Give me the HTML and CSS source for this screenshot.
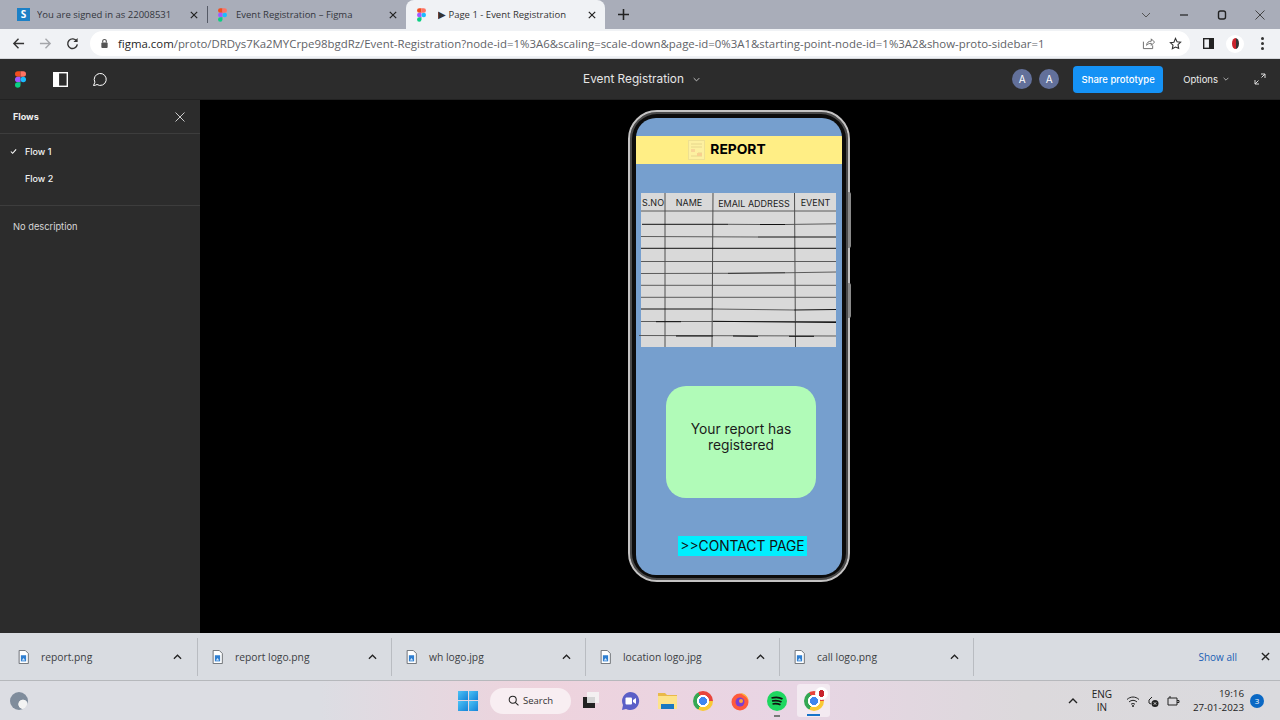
FILE: index.html
```html
<!DOCTYPE html>
<html lang="en">
<head>
    <meta charset="UTF-8">
    <meta name="viewport" content="width=device-width, initial-scale=1.0">
    <title>Page 1 - Event Registration</title>
    <link rel="stylesheet" href="styles.css">
</head>
<body>
    <!-- Shared icons -->
    <svg class="icon-defs" aria-hidden="true">
        <symbol id="figma" viewBox="0 0 12 18">
            <path d="M3 0h3v6H3a3 3 0 0 1 0-6z" fill="#f24e1e"/>
            <path d="M6 0h3a3 3 0 0 1 0 6H6z" fill="#ff7262"/>
            <path d="M3 6h3v6H3a3 3 0 0 1 0-6z" fill="#a259ff"/>
            <circle cx="9" cy="9" r="3" fill="#1abcfe"/>
            <path d="M3 12h3v3a3 3 0 1 1-3-3z" fill="#0acf83"/>
        </symbol>
        <symbol id="close" viewBox="0 0 10 10">
            <path d="M1 1l8 8M9 1l-8 8" fill="none" stroke="currentColor" stroke-width="1.5"/>
        </symbol>
        <symbol id="chev-up" viewBox="0 0 10 6">
            <path d="M1 5l4-4 4 4" fill="none" stroke="currentColor" stroke-width="1.4"/>
        </symbol>
        <symbol id="chev-down" viewBox="0 0 10 6">
            <path d="M1 1l4 4 4-4" fill="none" stroke="currentColor" stroke-width="1.2"/>
        </symbol>
        <symbol id="file" viewBox="0 0 12 16">
            <path d="M1 .5h7l3.5 3.5v11.5H1z" fill="#fff" stroke="#5f6368"/>
            <rect x="3" y="6" width="6" height="7" fill="#2f7fd1"/>
            <path d="M4 12l2-3 2 3z" fill="#cfe4fa"/>
        </symbol>
    </svg>

    <!-- Browser tabs -->
    <div class="tabstrip">
        <div class="tab">
            <span class="favicon-s">S</span>
            <span class="tab-title">You are signed in as 22008531</span>
            <svg class="tab-close"><use href="#close"/></svg>
        </div>
        <div class="tab tab-divided">
            <svg class="tab-figma"><use href="#figma"/></svg>
            <span class="tab-title">Event Registration – Figma</span>
            <svg class="tab-close"><use href="#close"/></svg>
        </div>
        <div class="tab tab-active">
            <svg class="tab-figma"><use href="#figma"/></svg>
            <span class="tab-title">▶ Page 1 - Event Registration</span>
            <svg class="tab-close"><use href="#close"/></svg>
        </div>
        <svg class="new-tab" viewBox="0 0 12 12"><path d="M6 0v12M0 6h12" stroke="#222" stroke-width="1.7"/></svg>
        <div class="window-controls">
            <svg viewBox="0 0 12 12"><path d="M2 4l4 4 4-4" fill="none" stroke="#555" stroke-width="1"/></svg>
            <svg viewBox="0 0 12 12"><path d="M2 6h8" stroke="#222" stroke-width="1.2"/></svg>
            <svg viewBox="0 0 12 12"><rect x="2.5" y="2" width="7" height="8" rx="2" fill="none" stroke="#222" stroke-width="1.4"/></svg>
            <svg viewBox="0 0 12 12"><path d="M1.5 1.5l9 9M10.5 1.5l-9 9" stroke="#444" stroke-width="1"/></svg>
        </div>
    </div>

    <!-- Address bar -->
    <div class="toolbar">
        <svg class="nav-icon" viewBox="0 0 14 14"><path d="M13 7H2M7 2L2 7l5 5" fill="none" stroke="#333" stroke-width="1.5"/></svg>
        <svg class="nav-icon" viewBox="0 0 14 14"><path d="M1 7h11M7 2l5 5-5 5" fill="none" stroke="#a4a6aa" stroke-width="1.5"/></svg>
        <svg class="nav-icon" viewBox="0 0 14 14"><path d="M11.5 4.5A5.2 5.2 0 1 0 12.2 8" fill="none" stroke="#333" stroke-width="1.5"/><path d="M12.5 1v4.5H8z" fill="#333"/></svg>
        <div class="omnibox">
            <svg class="lock" viewBox="0 0 10 12"><path d="M3 5V3.5a2 2 0 0 1 4 0V5" fill="none" stroke="#555" stroke-width="1.2"/><rect x="1.5" y="5" width="7" height="6" rx="1" fill="#555"/></svg>
            <span class="url">figma.com<span class="url-path">/proto/DRDys7Ka2MYCrpe98bgdRz/Event-Registration?node-id=1%3A6&amp;scaling=scale-down&amp;page-id=0%3A1&amp;starting-point-node-id=1%3A2&amp;show-proto-sidebar=1</span></span>
            <svg class="omni-share" viewBox="0 0 14 14"><path d="M1.5 5v7.5h10V9M5 9c0-3 2-4.5 5-4.5V2l3.5 3.5L10 9V6.8C8 6.8 6 7.5 5 9z" fill="none" stroke="#666" stroke-width="1"/></svg>
            <svg class="omni-star" viewBox="0 0 14 14"><path d="M7 1.5l1.7 3.6 3.8.5-2.8 2.7.7 3.9L7 10.8l-3.4 1.9.7-3.9-2.800-2.7 3.800-.5z" fill="none" stroke="#333" stroke-width="1.2"/></svg>
        </div>
        <svg class="side-panel" viewBox="0 0 12 12"><rect x=".75" y=".75" width="10.5" height="10.5" fill="none" stroke="#222" stroke-width="1.5"/><rect x="6.5" y="1" width="5" height="10" fill="#222"/></svg>
        <span class="profile"><span class="profile-dot"></span></span>
        <span class="kebab"><i></i><i></i><i></i></span>
    </div>

    <!-- Figma prototype header -->
    <header class="figma-bar">
        <div class="figma-tools">
            <svg class="figma-logo"><use href="#figma"/></svg>
            <svg class="panel-icon" viewBox="0 0 16 16"><rect x=".75" y=".75" width="14.5" height="14.5" fill="none" stroke="#fff" stroke-width="1.5"/><rect x="1" y="1" width="5.5" height="14" fill="#fff"/></svg>
            <svg class="comment-icon" viewBox="0 0 16 16"><path d="M1.5 14.5l1.4-3.3A6 6 0 1 1 5 13.5c-1 .6-2.200 1-3.500 1z" fill="none" stroke="#fff" stroke-width="1"/></svg>
        </div>
        <div class="figma-title">Event Registration <svg class="title-chev"><use href="#chev-down"/></svg></div>
        <div class="figma-actions">
            <span class="avatar">A</span>
            <span class="avatar">A</span>
            <span class="share-btn">Share prototype</span>
            <span class="options">Options <svg class="options-chev"><use href="#chev-down"/></svg></span>
            <svg class="expand-icon" viewBox="0 0 12 12"><path d="M7 1h4v4M11 1L7.5 4.5M1 7v4h4M1 11l3.5-3.5" fill="none" stroke="#ddd" stroke-width="1"/></svg>
        </div>
    </header>

    <main class="workspace">
        <aside class="sidebar">
            <div class="sidebar-head">
                <span>Flows</span>
                <svg class="sidebar-close" viewBox="0 0 10 10"><path d="M.5.5l9 9M9.5.5l-9 9" stroke="#ddd" stroke-width=".9"/></svg>
            </div>
            <ul class="flow-list">
                <li><svg class="flow-check" viewBox="0 0 8 8"><path d="M1 4l2 2 4-4.5" fill="none" stroke="#fff" stroke-width="1.2"/></svg>Flow 1</li>
                <li>Flow 2</li>
            </ul>
            <p class="flow-desc">No description</p>
        </aside>

        <section class="canvas">
            <div class="phone">
                <span class="side-btn side-btn-long"></span>
                <span class="side-btn side-btn-short"></span>
                <div class="screen">
                    <div class="report-band">
                        <svg class="report-logo" viewBox="0 0 17 20">
                            <rect x=".5" y=".5" width="16" height="19" fill="#fdf0a0" stroke="#eee092"/>
                            <path d="M3 4h11M3 7h11M3 10h4M10 13h4M3 16h11" stroke="#e6d68c"/>
                            <rect x="3" y="9" width="4" height="3" fill="#f8d596"/>
                            <rect x="9" y="13" width="5" height="3" fill="#f8cf8e"/>
                        </svg>
                        <span>REPORT</span>
                    </div>

                    <div class="report-table">
                        <div class="table-head">
                            <span>S.NO</span>
                            <span>NAME</span>
                            <span class="head-email">EMAIL ADDRESS</span>
                            <span>EVENT</span>
                        </div>
                        <!-- The rows are hand drawn, so the rules are a little uneven -->
                        <svg class="table-lines" viewBox="0 0 195 154">
                            <g stroke="#2b2b2b" stroke-width=".8" fill="none">
                                <path d="M24 0V154M72 0L71 154M153.5 0L154.5 154"/>
                            </g>
                            <g stroke="#4d4d4d" stroke-width=".9" fill="none">
                                <path d="M0 18H195"/>
                                <path d="M87 31.3L119 31.5M144 31.5L195 30.8"/>
                                <path d="M0 43.5L117 44"/>
                                <path d="M0 68.5H195"/>
                                <path d="M0 80.5L87 80.3M144 79.8L195 79"/>
                                <path d="M0 92.3H195"/>
                                <path d="M0 104.3H195"/>
                                <path d="M72 116L153 117"/>
                                <path d="M0 128.5H195"/>
                                <path d="M-2 142.5L195 143"/>
                            </g>
                            <g stroke="#111" stroke-width="1" fill="none">
                                <path d="M1 31.3L87 31.3M119 31.5L144 31.5"/>
                                <path d="M117 44L195 44"/>
                                <path d="M0 55.3H195"/>
                                <path d="M87 80.3L144 79.8"/>
                                <path d="M0 116H72M153 117L195 116.500"/>
                                <path d="M15 128.700H40M72 128.300L195 129.500"/>
                                <path d="M35 143L72 143M92 143L117 143.300M148 143.300L173 143.300"/>
                            </g>
                        </svg>
                    </div>

                    <div class="message-card">Your report has registered</div>
                    <div class="contact-link">&gt;&gt;CONTACT PAGE</div>
                </div>
            </div>
        </section>
    </main>

    <!-- Chrome downloads -->
    <div class="downloads">
        <div class="download"><svg class="file-icon"><use href="#file"/></svg><span class="download-name">report.png</span><svg class="download-chev"><use href="#chev-up"/></svg></div>
        <div class="download"><svg class="file-icon"><use href="#file"/></svg><span class="download-name">report logo.png</span><svg class="download-chev"><use href="#chev-up"/></svg></div>
        <div class="download"><svg class="file-icon"><use href="#file"/></svg><span class="download-name">wh logo.jpg</span><svg class="download-chev"><use href="#chev-up"/></svg></div>
        <div class="download"><svg class="file-icon"><use href="#file"/></svg><span class="download-name">location logo.jpg</span><svg class="download-chev"><use href="#chev-up"/></svg></div>
        <div class="download"><svg class="file-icon"><use href="#file"/></svg><span class="download-name">call logo.png</span><svg class="download-chev"><use href="#chev-up"/></svg></div>
        <span class="show-all">Show all</span>
        <svg class="downloads-close"><use href="#close"/></svg>
    </div>

    <!-- Windows taskbar -->
    <footer class="taskbar">
        <span class="weather"></span>
        <div class="task-center">
            <span class="win-logo"><i></i><i></i><i></i><i></i></span>
            <span class="search-pill">
                <svg class="search-icon" viewBox="0 0 14 14"><circle cx="6" cy="6" r="4.5" fill="none" stroke="#222" stroke-width="1.3"/><path d="M9.3 9.3l4 4" stroke="#222" stroke-width="1.3"/></svg>
                Search
            </span>
            <span class="task-view"></span>
            <svg class="teams-icon" viewBox="0 0 20 20"><path d="M10 1a9 9 0 1 1-4 17l-4 1 1-5A9 9 0 0 1 10 1z" fill="#5b5fc7"/><rect x="5.5" y="6.5" width="6.5" height="7" rx="1" fill="#fff"/><path d="M13 9l3-2v6l-3-2z" fill="#fff"/></svg>
            <svg class="folder-icon" viewBox="0 0 21 20"><path d="M1 2h7l2 2h10v14H1z" fill="#e9b949"/><path d="M1 5h19v13H1z" fill="#fde38a"/><rect x="4" y="13" width="13" height="5" fill="#1a78c2"/></svg>
            <span class="chrome-icon chrome-plain"></span>
            <svg class="firefox-icon" viewBox="0 0 20 20"><circle cx="10" cy="11" r="8.5" fill="#ff5a3c"/><path d="M10 2c5 0 9 4 8.5 9-.5-3-2-5-4-6z" fill="#ffb03a"/><circle cx="10" cy="11" r="4.5" fill="#7a3fd0"/><circle cx="11" cy="10" r="2" fill="#ffa436"/></svg>
            <span class="spotify-wrap">
                <svg class="spotify-icon" viewBox="0 0 20 20"><circle cx="10" cy="10" r="10" fill="#1ed760"/><path d="M4.5 7c4-1 8-.8 11 1M5 10c3.5-.8 7-.5 9.5 1M5.5 13c3-.6 5.5-.4 8 .8" fill="none" stroke="#111" stroke-width="1.7"/></svg>
                <i class="running-dot"></i>
            </span>
            <span class="active-app">
                <span class="chrome-icon"></span>
                <span class="app-badge"></span>
                <i class="active-bar"></i>
            </span>
        </div>
        <div class="tray">
            <svg class="tray-chev"><use href="#chev-up"/></svg>
            <span class="lang">ENG<br>IN</span>
            <svg class="tray-icon" viewBox="0 0 14 14"><path d="M1 5.5c3.5-3.3 8.5-3.3 12 0M3 8c2.5-2.2 5.5-2.2 8 0M5 10.3c1.3-1 2.7-1 4 0" fill="none" stroke="#222" stroke-width="1"/><circle cx="7" cy="12" r="1" fill="#222"/></svg>
            <svg class="tray-icon" viewBox="0 0 14 14"><path d="M6 3L3 6v3l2 1" fill="none" stroke="#222" stroke-width="1"/><circle cx="9" cy="9.5" r="3.5" fill="#222"/><path d="M7.8 8.3l2.4 2.4M10.2 8.3l-2.4 2.4" stroke="#fff" stroke-width=".8"/></svg>
            <svg class="tray-icon" viewBox="0 0 14 14"><path d="M2 4h9v7H2zM4 4V2M11 6.5h2v2h-2" fill="none" stroke="#222" stroke-width="1"/></svg>
            <span class="clock">19:16<br>27-01-2023</span>
            <span class="notify">3</span>
        </div>
    </footer>
</body>
</html>
```

FILE: styles.css
```css
/* Global Styles */
html, body {
    margin: 0;
    padding: 0;
    height: 100%;
}

body {
    display: flex;
    flex-direction: column;
    width: 1280px;
    height: 720px;
    overflow: hidden;
    font-family: 'Open Sans', 'Noto Sans', sans-serif;
    color: #222;
    background: #000;
}

svg {
    display: block;
    flex: none;
}

.icon-defs {
    display: none;
}

/* Browser Tabs */
.tabstrip {
    display: flex;
    align-items: flex-end;
    height: 29px;
    padding-left: 8px;
    background: #a9adb9;
}

.tab {
    display: flex;
    align-items: center;
    gap: 7px;
    width: 199px;
    height: 29px;
    box-sizing: border-box;
    padding: 0 8px 0 9px;
    font-size: 9.5px;
    color: #33363d;
    position: relative;
}

.tab-divided::before {
    content: "";
    position: absolute;
    left: 0;
    top: 6px;
    width: 1px;
    height: 17px;
    background: #555a66;
}

.tab-active {
    background: #f0f2f5;
    border-radius: 8px 8px 0 0;
    color: #333;
}

.tab-active .tab-title {
    margin-left: 3px;
}

.tab-title {
    flex: 1;
    white-space: nowrap;
    overflow: hidden;
}

.favicon-s {
    width: 13px;
    height: 13px;
    background: #1c80c6;
    color: #fff;
    font-size: 10px;
    font-weight: 700;
    line-height: 13px;
    text-align: center;
}

.tab-figma {
    width: 9px;
    height: 14px;
    margin: 0 2px;
}

.tab-close {
    width: 8px;
    height: 8px;
    margin-right: 1px;
    color: #222;
}

.new-tab {
    width: 11px;
    height: 11px;
    margin: 0 0 9px 13px;
}

.window-controls {
    display: flex;
    gap: 26px;
    margin-left: auto;
    padding-right: 14px;
    align-self: center;
}

.window-controls svg {
    width: 12px;
    height: 12px;
}

/* Address Bar */
.toolbar {
    display: flex;
    align-items: center;
    height: 30px;
    padding-left: 12px;
    background: #f0f2f5;
    border-bottom: 1px solid #d4d6da;
    box-sizing: border-box;
}

.nav-icon {
    width: 13px;
    height: 13px;
    margin-right: 14px;
}

.omnibox {
    display: flex;
    align-items: center;
    width: 1100px;
    height: 25px;
    margin-left: -3px;
    padding-left: 10px;
    box-sizing: border-box;
    background: #fff;
    border-radius: 13px;
}

.lock {
    width: 9px;
    height: 11px;
    margin-right: 9px;
}

.url {
    flex: 1;
    font-size: 11.42px;
    white-space: nowrap;
    color: #1f1f1f;
}

.url-path {
    color: #5f6368;
}

.omni-share {
    width: 13px;
    height: 13px;
    margin-right: 14px;
}

.omni-star {
    width: 13px;
    height: 13px;
    margin-right: 8px;
}

.side-panel {
    width: 11px;
    height: 11px;
    margin-left: 13px;
}

.profile {
    width: 18px;
    height: 18px;
    margin-left: 12px;
    background: #fff;
    border-radius: 50%;
    display: flex;
    align-items: center;
    justify-content: center;
}

.profile-dot {
    width: 7px;
    height: 11px;
    border-radius: 50%;
    background: linear-gradient(90deg, #c8232c 60%, #333 60%);
}

.kebab {
    display: flex;
    flex-direction: column;
    gap: 2px;
    margin-left: 17px;
}

.kebab i {
    width: 3px;
    height: 3px;
    border-radius: 50%;
    background: #333;
}

/* Figma Header */
.figma-bar {
    display: grid;
    grid-template-columns: 1fr auto 1fr;
    align-items: center;
    height: 41px;
    background: #2c2c2c;
    color: #fff;
    border-bottom: 1px solid #222;
    box-sizing: border-box;
}

.figma-tools {
    display: flex;
    align-items: center;
    padding-left: 15px;
}

.figma-logo {
    width: 11px;
    height: 17px;
}

.panel-icon {
    width: 15px;
    height: 15px;
    margin-left: 27px;
}

.comment-icon {
    width: 16px;
    height: 16px;
    margin-left: 24px;
}

.figma-title {
    display: flex;
    align-items: center;
    gap: 9px;
    font-family: 'Inter', sans-serif;
    font-size: 11.8px;
    color: #e6e6e6;
    margin-right: -3px;
}

.title-chev {
    width: 7px;
    height: 5px;
    color: #ddd;
}

.figma-actions {
    display: flex;
    align-items: center;
    justify-content: flex-end;
    font-family: 'Inter', sans-serif;
}

.avatar {
    width: 20px;
    height: 20px;
    margin-right: 7px;
    border-radius: 50%;
    background: #62709a;
    color: #fff;
    font-size: 10px;
    line-height: 20px;
    text-align: center;
}

.share-btn {
    width: 90px;
    height: 27px;
    margin-left: 7px;
    border-radius: 4px;
    background: #1592f5;
    color: #fff;
    font-size: 9.5px;
    font-weight: 500;
    line-height: 27px;
    text-align: center;
}

.options {
    display: flex;
    align-items: center;
    gap: 5px;
    margin-left: 20px;
    font-size: 9.5px;
    color: #eee;
}

.options-chev {
    width: 6px;
    height: 4px;
    color: #ddd;
}

.expand-icon {
    width: 12px;
    height: 12px;
    margin: 0 14px 0 25px;
}

/* Workspace */
.workspace {
    display: flex;
    height: 533px;
}

.sidebar {
    width: 200px;
    background: #2c2c2c;
    color: #fff;
    font-family: 'Inter', sans-serif;
    font-size: 9px;
}

.sidebar-head {
    display: flex;
    align-items: center;
    justify-content: space-between;
    height: 34px;
    padding: 0 15px 0 13px;
    font-weight: 700;
    border-bottom: 1px solid #3d3d3d;
    box-sizing: border-box;
    color: #eee;
}

.sidebar-close {
    width: 10px;
    height: 10px;
}

.flow-list {
    list-style: none;
    margin: 0;
    padding: 4px 0 13px 25px;
    border-bottom: 1px solid #3d3d3d;
}

.flow-list li {
    position: relative;
    height: 27px;
    line-height: 27px;
    font-weight: 500;
    color: #f2f2f2;
}

.flow-check {
    position: absolute;
    left: -15px;
    top: 10px;
    width: 7px;
    height: 7px;
}

.flow-desc {
    margin: 15px 0 0 13px;
    line-height: 12px;
    font-size: 9.3px;
    color: #d6d6d6;
}

/* Phone Prototype */
.canvas {
    flex: 1;
    display: flex;
    justify-content: center;
    padding-top: 10px;
    background: #000;
}

.phone {
    position: relative;
    width: 222px;
    height: 472px;
    margin-left: -2px;
    box-sizing: border-box;
    padding: 6px 6px 5px;
    border: 2px solid #c4c3c3;
    border-radius: 29px;
    background: #0c0c0c;
    box-shadow: inset 0 0 0 2px #4a4a4a;
}

.side-btn {
    position: absolute;
    left: 218px;
    width: 3px;
    background: #8a8a8a;
    border-radius: 0 2px 2px 0;
}

.side-btn-long {
    top: 80px;
    height: 56px;
}

.side-btn-short {
    top: 171px;
    height: 35px;
}

.screen {
    display: flex;
    flex-direction: column;
    align-items: center;
    height: 100%;
    overflow: hidden;
    border-radius: 20px;
    background: #769fce;
    font-family: 'Inter', sans-serif;
}

.report-band {
    display: flex;
    align-items: center;
    justify-content: center;
    gap: 5px;
    align-self: stretch;
    height: 28px;
    box-sizing: border-box;
    margin-top: 18px;
    padding: 0 24px 2px 0;
    background: #ffee85;
    font-size: 13.8px;
    font-weight: 700;
    color: #000;
}

.report-logo {
    width: 17px;
    height: 20px;
    margin-top: 2px;
}

.report-table {
    position: relative;
    width: 195px;
    height: 154px;
    margin: 29px 0 0 -1px;
    background: #d9d9d9;
}

.table-head {
    display: grid;
    grid-template-columns: 24px 48px 82px 41px;
    height: 18px;
    font-size: 9px;
    line-height: 19px;
    text-align: center;
    color: #222;
}

.head-email {
    padding-top: 1px;
}

.table-lines {
    position: absolute;
    top: 0;
    left: 0;
    width: 195px;
    height: 154px;
    overflow: visible;
}

.message-card {
    display: flex;
    align-items: flex-start;
    justify-content: center;
    width: 150px;
    height: 112px;
    margin: 39px 0 0 4px;
    padding: 35px 20px 0;
    box-sizing: border-box;
    border-radius: 20px;
    background: #b1fbb8;
    font-size: 13.8px;
    line-height: 16px;
    text-align: center;
    color: #1b1b1b;
}

.contact-link {
    width: 129px;
    height: 20px;
    margin: 38px 0 0 7px;
    background: #00efff;
    font-size: 13.8px;
    line-height: 21px;
    text-align: center;
    white-space: nowrap;
    color: #111;
}

/* Downloads Bar */
.downloads {
    display: flex;
    align-items: center;
    height: 48px;
    background: #d9dce1;
    border-bottom: 1px solid #b6b8bc;
    box-sizing: border-box;
    font-size: 10.3px;
    color: #3c4043;
}

.download {
    display: flex;
    align-items: center;
    width: 194px;
    height: 38px;
    box-sizing: border-box;
    padding: 0 14px 0 14px;
    border-right: 1px solid #b9bcc1;
}

.download:first-child {
    width: 198px;
    padding: 0 15px 0 18px;
}

.file-icon {
    width: 11px;
    height: 14px;
    margin-right: 12px;
}

.download-name {
    flex: 1;
}

.download-chev {
    width: 9px;
    height: 6px;
    color: #222;
}

.show-all {
    margin-left: auto;
    font-size: 10px;
    color: #1a5fb4;
}

.downloads-close {
    width: 9px;
    height: 9px;
    margin: 0 10px 0 24px;
    color: #222;
}

/* Windows Taskbar */
.taskbar {
    display: flex;
    align-items: center;
    height: 39px;
    background: linear-gradient(90deg, #dcdde3 0%, #dcdde3 25%, #eed3dd 42%, #e8d5e4 62%, #dcd9dc 80%, #dadade 100%);
}

.weather {
    width: 18px;
    height: 18px;
    margin-left: 10px;
    border-radius: 50%;
    background: radial-gradient(circle at 72% 68%, #f3f3f3 24%, #7f8c9c 28%);
}

.task-center {
    display: flex;
    align-items: center;
    margin-left: 430px;
}

.win-logo {
    display: grid;
    grid-template-columns: 9.5px 9.5px;
    gap: 1px;
}

.win-logo i {
    height: 9.5px;
    background: linear-gradient(135deg, #4cc2f5, #1583d8);
}

.search-pill {
    display: flex;
    align-items: center;
    gap: 4px;
    width: 81px;
    height: 26px;
    margin-left: 12px;
    padding-left: 18px;
    box-sizing: border-box;
    border-radius: 13px;
    background: #f8eef2;
    font-size: 9.5px;
    color: #333;
}

.search-icon {
    width: 11px;
    height: 11px;
}

.task-view {
    position: relative;
    width: 12px;
    height: 11px;
    margin: 4px 0 0 12px;
    background: #222;
}

.task-view::after {
    content: "";
    position: absolute;
    left: 4px;
    top: -5px;
    width: 12px;
    height: 11px;
    background: rgba(245, 245, 245, 0.85);
}

.teams-icon {
    width: 20px;
    height: 20px;
    margin-left: 25px;
}

.folder-icon {
    width: 21px;
    height: 20px;
    margin-left: 17px;
}

.chrome-icon {
    display: block;
    width: 20px;
    height: 20px;
    border-radius: 50%;
    background:
        radial-gradient(circle, #3f86f0 0 28%, #fff 30% 42%, transparent 44%),
        conic-gradient(#e8453c 0 90deg, #f9c935 90deg 210deg, #35a853 210deg 330deg, #e8453c 330deg);
}

.chrome-plain {
    margin-left: 15px;
}

.firefox-icon {
    width: 20px;
    height: 20px;
    margin-left: 17px;
}

.spotify-wrap {
    position: relative;
    margin-left: 17px;
}

.spotify-icon {
    width: 20px;
    height: 20px;
}

.running-dot {
    position: absolute;
    left: 7px;
    bottom: -6px;
    width: 6px;
    height: 2px;
    background: #777;
}

.active-app {
    position: relative;
    display: flex;
    align-items: center;
    justify-content: center;
    width: 33px;
    height: 33px;
    margin-left: 10px;
    border-radius: 3px;
    background: #f3eaf1;
}

.app-badge {
    position: absolute;
    right: 2px;
    top: 3px;
    width: 13px;
    height: 13px;
    border-radius: 50%;
    background: radial-gradient(ellipse 3px 4px at 50% 50%, #c8232c 90%, transparent 100%), #fff;
}

.active-bar {
    position: absolute;
    left: 10px;
    bottom: 1px;
    width: 13px;
    height: 2px;
    background: #1673c9;
}

.tray {
    display: flex;
    align-items: center;
    margin-left: auto;
    padding-right: 16px;
    font-size: 10px;
    color: #222;
}

.tray-chev {
    width: 10px;
    height: 6px;
    margin-right: 9px;
}

.lang {
    width: 30px;
    margin-right: 9px;
    text-align: center;
    line-height: 13px;
}

.tray-icon {
    width: 14px;
    height: 14px;
    margin-right: 6px;
}

.clock {
    margin-left: 7px;
    text-align: right;
    line-height: 13.5px;
    font-size: 9.8px;
}

.notify {
    width: 14px;
    height: 14px;
    margin-left: 6px;
    border-radius: 50%;
    background: #0a68c4;
    color: #fff;
    font-size: 8px;
    line-height: 14px;
    text-align: center;
}
```
